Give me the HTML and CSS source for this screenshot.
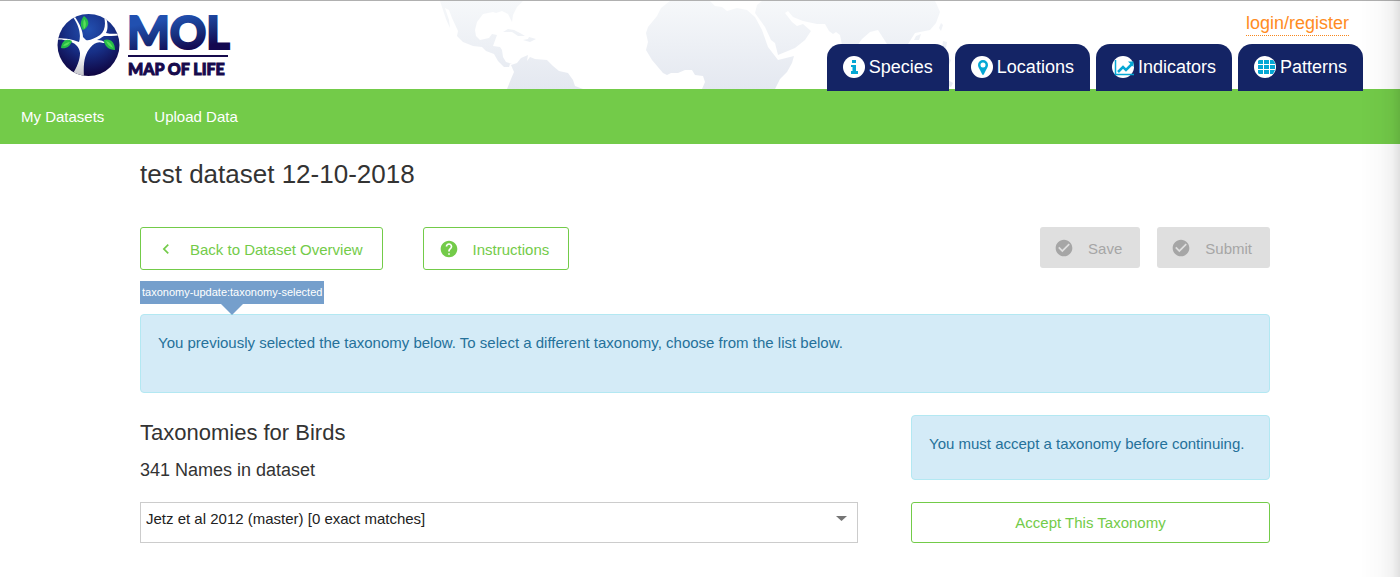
FILE: index.html
```html
<!DOCTYPE html>
<html lang="en">
<head>
<meta charset="utf-8">
<title>Map of Life - Datasets</title>
<link rel="stylesheet" href="styles.css">
</head>
<body>
<header class="header">
  <svg class="world" viewBox="440 1 520 88" width="520" height="88" aria-hidden="true">
    <defs>
      <linearGradient id="land" gradientUnits="userSpaceOnUse" x1="0" y1="1" x2="0" y2="89">
        <stop offset="0" stop-color="#f6f8fa"/>
        <stop offset="1" stop-color="#e4e8f0"/>
      </linearGradient>
    </defs>
    <g fill="url(#land)">
      <path d="M440 1L443 10L446 19L450 28L449 20L445 8L449 10L452 18L458 31L457 36L463 42L473 46L482 47L486 51L494 54L498 61L504 67L509 67L510 64L512 64L506 62L503 57L502 50L500 47L493 46L497 35L492 34L489 38L480 40L476 36L475 30L477 22L483 14L493 12L496 13L502 11L508 14L512 22L513 15L517 7L523 1Z"/>
      <path d="M507 89L511 79L514 72L511 65L517 63L521 58L528 55L527 61L530 57L535 59L547 60L553 66L559 71L568 73L573 80L575 86L583 89Z"/>
      <path d="M503 32L508 29L514 30L520 33L525 36L518 36L512 32Z"/>
      <path d="M523 40L528 39L529 37L536 39L530 42Z"/>
      <path d="M670 1L661 8L657 16L648 27L646 33L648 42L646 50L652 60L663 73L667 75L671 73L678 73L685 70L692 70L695 75L703 76L705 82L702 89L775 89L780 79L787 72L792 63L794 56L778 60L768 47L762 30L755 17L747 10L737 8L727 11L722 7L715 6L710 1Z"/>
      <path d="M762 1L757 5L755 13L765 27L771 40L775 43L778 55L795 48L805 40L811 31L803 24L797 26L792 22L785 13L788 11L793 17L803 21L817 24L825 24L829 31L833 34L836 32L840 35L843 50L848 62L854 50L862 39L870 32L878 30L887 44L893 60L905 60L908 44L915 33L930 30L936 23L940 12L937 5L935 1Z"/>
      <path d="M941 23L943 25L941 31L939 28ZM916 36L921 34L919 40L914 40ZM943 41L947 42L946 48L942 47ZM945 55L951 60L949 65L944 62ZM948 80L953 83L951 87L946 85Z"/>
    </g>
  </svg>
  <a class="brand" href="#" aria-label="Map of Life home">
    <svg viewBox="57 9 184 76" width="184" height="76" role="img" aria-label="MOL Map of Life">
      <defs>
        <radialGradient id="globe" cx="0.5" cy="0.25" r="0.75">
          <stop offset="0" stop-color="#2350b0"/>
          <stop offset="0.5" stop-color="#172f86"/>
          <stop offset="1" stop-color="#0f0440"/>
        </radialGradient>
        <linearGradient id="word" gradientUnits="userSpaceOnUse" x1="170" y1="14" x2="178" y2="52">
          <stop offset="0.1" stop-color="#2150b0"/>
          <stop offset="0.55" stop-color="#17317f"/>
          <stop offset="1" stop-color="#130850"/>
        </linearGradient>
        <linearGradient id="trunk" x1="0" y1="0" x2="0" y2="1">
          <stop offset="0.6" stop-color="#ffffff"/>
          <stop offset="1" stop-color="#bcbcc4"/>
        </linearGradient>
        <clipPath id="disc"><circle cx="88.500" cy="45" r="31"/></clipPath>
      </defs>
      <circle cx="88.500" cy="45" r="31" fill="url(#globe)"/>
      <g clip-path="url(#disc)">
        <path fill="url(#trunk)" d="M70 78C77 68 80 60 80 53C79 46 75 43 68 41C64 40 60 39 57 40L57 38.500C63 38 68 39 73 40L79 42C81 36 80 27 73 17L75 17C80 24 83 32 83 37L86 40C90 41 95 38 100 35C105 31 106 24 104 17L106 17C108 24 108 29 106 33C110 34 115 34 121 33.500L121 35C114 36 109 36 104 36C101 38 99 39 97 40C101 40 104 41 105 43L103 43C98 41 94 43 90 48C85 54 83 62 84 78Z"/>
        <path fill="#25bd48" d="M84 16C90 20 90 27 83 30C80 26 80 21 84 16ZM61 48C62 41 66 38 72 41C70 47 66 49 61 48ZM104 40C110 38 115 42 115 50C109 50 104 46 104 40Z"/>
        <path fill="#5bdc5d" d="M84 19C87 23 86 27 84 29C83 26 83 22 84 19ZM63 46C65 43 68 42 70 42C68 45 66 46 63 46ZM106 41C110 42 112 45 113 48C109 46 107 44 106 41Z"/>
      </g>
      <text class="brand-name" x="127" y="49" fill="url(#word)" stroke="url(#word)">MOL</text>
      <rect x="128" y="55" width="100" height="2" fill="#160a4c"/>
      <text class="brand-tag" x="128" y="75">MAP OF LIFE</text>
    </svg>
  </a>
  <div class="header-side">
    <a class="login" href="#">login/register</a>
    <nav class="tabs" aria-label="Sections">
      <a class="tab" href="#">
        <svg width="22" height="22" viewBox="0 0 22 22" aria-hidden="true"><circle cx="11" cy="11" r="11" fill="#fff"/><path fill="#04a7d4" d="M9 4h4v3H9zM8 9h5v6h2v3H8v-3h1.500v-4H8z"/></svg>
        <span>Species</span></a>
      <a class="tab" href="#">
        <svg width="22" height="22" viewBox="0 0 22 22" aria-hidden="true"><circle cx="11" cy="11" r="11" fill="#fff"/><path fill="#04a7d4" fill-rule="evenodd" d="M12 4a5 5 0 0 1 5 5c0 2-1 3-2 5l-2 4q-1 2-2 0l-2-4c-1-2-2-3-2-5a5 5 0 0 1 5-5zm0 2.500a2.500 2.500 0 1 0 0 5a2.500 2.500 0 1 0 0-5z"/></svg>
        <span>Locations</span></a>
      <a class="tab" href="#">
        <svg width="22" height="22" viewBox="0 0 22 22" aria-hidden="true"><circle cx="11" cy="11" r="11" fill="#fff"/><path fill="none" stroke="#04a7d4" stroke-width="1.500" d="M3.500 4v14.500H22"/><path fill="none" stroke="#04a7d4" stroke-width="2.500" d="M6 16l5-5 3 3 6-6"/><path fill="#04a7d4" d="M16 5.500h5.500V11z"/></svg>
        <span>Indicators</span></a>
      <a class="tab" href="#">
        <svg width="22" height="22" viewBox="0 0 22 22" aria-hidden="true"><circle cx="11" cy="11" r="11" fill="#fff"/><path fill="#04a7d4" d="M5 4h4v4H4V5zM10 4h5v4h-5zM16 4h3l2 3v1h-5zM4 9h5v4H4zM10 9h5v4h-5zM16 9h5v4h-5zM4 14h5v4H5l-1-1zM10 14h5v4h-5zM16 14h5l-2 4h-3z"/></svg>
        <span>Patterns</span></a>
    </nav>
  </div>
</header>
<nav class="subnav" aria-label="Datasets">
  <a href="#">My Datasets</a>
  <a href="#">Upload Data</a>
</nav>
<main class="content">
  <h1>test dataset 12-10-2018</h1>
  <div class="toolbar">
    <button class="btn btn-outline" type="button">
      <svg width="20" height="20" viewBox="0 0 24 24" aria-hidden="true"><path fill="currentColor" d="M15.410 7.410L14 6l-6 6 6 6 1.410-1.410L10.830 12z"/></svg>
      Back to Dataset Overview</button>
    <button class="btn btn-outline" type="button">
      <svg width="20" height="20" viewBox="0 0 24 24" aria-hidden="true"><path fill="currentColor" d="M12 2C6.480 2 2 6.480 2 12s4.480 10 10 10 10-4.480 10-10S17.520 2 12 2zm1 17h-2v-2h2v2zm2.070-7.750l-.9.920C13.450 12.900 13 13.500 13 15h-2v-.5c0-1.100.45-2.100 1.170-2.830l1.240-1.260c.37-.36.590-.86.590-1.410 0-1.100-.9-2-2-2s-2 .9-2 2H8c0-2.210 1.790-4 4-4s4 1.790 4 4c0 .88-.36 1.680-.93 2.250z"/></svg>
      Instructions</button>
    <div class="actions">
      <button class="btn btn-solid" type="button" disabled>
        <svg width="20" height="20" viewBox="0 0 24 24" aria-hidden="true"><path fill="currentColor" d="M12 2C6.480 2 2 6.480 2 12s4.480 10 10 10 10-4.480 10-10S17.520 2 12 2zm-2 15l-5-5 1.410-1.410L10 14.170l7.590-7.590L19 8l-9 9z"/></svg>
        Save</button>
      <button class="btn btn-solid" type="button" disabled>
        <svg width="20" height="20" viewBox="0 0 24 24" aria-hidden="true"><path fill="currentColor" d="M12 2C6.480 2 2 6.480 2 12s4.480 10 10 10 10-4.480 10-10S17.520 2 12 2zm-2 15l-5-5 1.410-1.410L10 14.170l7.590-7.590L19 8l-9 9z"/></svg>
        Submit</button>
    </div>
  </div>
  <div class="key-tip">taxonomy-update:taxonomy-selected</div>
  <div class="notice notice-wide">You previously selected the taxonomy below. To select a different taxonomy, choose from the list below.</div>
  <div class="columns">
    <section>
      <h2>Taxonomies for Birds</h2>
      <h3 id="names">341 Names in dataset</h3>
    </section>
    <div class="notice">You must accept a taxonomy before continuing.</div>
    <div class="picker">
      <select aria-label="Taxonomy" aria-describedby="names">
        <option>Jetz et al 2012 (master) [0 exact matches]</option>
      </select>
      <svg class="caret" width="11" height="5" viewBox="0 0 11 5" aria-hidden="true"><path fill="#757575" d="M0 0h11L5.500 5z"/></svg>
    </div>
    <button class="btn btn-outline btn-accept" type="button">Accept This Taxonomy</button>
  </div>
</main>
<div class="edge-shade"></div>
</body>
</html>
```

FILE: styles.css
```css
* { box-sizing: border-box; }

body {
  margin: 0;
  background: #fff;
  color: #333;
  font-family: "Liberation Sans", Arial, sans-serif;
  font-size: 15px;
  line-height: 20px;
}

a { text-decoration: none; }

.header {
  position: relative;
  display: flex;
  justify-content: space-between;
  border-top: 1px solid #b0b0b0;
  padding: 0 37px 0 57px;
}

.world {
  position: absolute;
  top: 0;
  left: 50%;
  margin-left: -260px;
}

.brand { padding-top: 8px; }
.brand svg { display: block; overflow: visible; }
.brand-name { font: 900 45px Lato, sans-serif; stroke-width: 2px; }
.brand-tag {
  font: 900 16px Lato, sans-serif;
  fill: #160a4c;
  stroke: #160a4c;
  stroke-width: 1px;
}

.header-side {
  position: relative;
  z-index: 1;
  display: flex;
  flex-direction: column;
  align-items: flex-end;
  padding-top: 11px;
}

.login {
  margin-right: 14px;
  border-bottom: 1px dotted #f7861c;
  color: #ff8c23;
  font-size: 18px;
  line-height: 23px;
}

.tabs { display: flex; gap: 6px; margin: 8px 0 -2px; }

.tab {
  display: flex;
  align-items: center;
  gap: 4px;
  height: 47px;
  padding: 0 16px 2px;
  border-radius: 14px 14px 0 0;
  background: #142465;
  color: #fff;
  font-size: 18px;
}

.subnav {
  display: flex;
  gap: 50px;
  padding: 18px 21px 17px;
  background: #73cb49;
}
.subnav a { color: #fff; }

.content { padding: 14px 130px 0 140px; }

h1, h2, h3 { margin: 0; font-weight: 400; }
h1 { font-size: 26px; line-height: 32px; }
h2 { font-size: 22px; line-height: 28px; padding-top: 4px; }
h3 { font-size: 18px; line-height: 20px; padding-top: 13px; }

.toolbar { display: flex; align-items: flex-start; gap: 40px; margin-top: 37px; }

.btn {
  display: flex;
  align-items: center;
  justify-content: center;
  gap: 14px;
  border-radius: 3px;
  font: inherit;
  white-space: nowrap;
}

.btn-outline {
  min-height: 43px;
  padding: 2px 19px 0 15px;
  border: 1px solid #73cb49;
  background: #fff;
  color: #73cb49;
}

.btn-solid {
  min-height: 41px;
  padding: 2px 18px 0 14px;
  border: 0;
  background: #dfdfdf;
  color: #a6a6a6;
}
.btn svg { margin-top: -2px; }

.actions { display: flex; gap: 17px; margin-left: auto; }

.key-tip {
  position: relative;
  width: max-content;
  margin-top: 11px;
  padding: 0 2px;
  background: #759fcc;
  color: #fff;
  font-size: 11px;
  line-height: 23px;
}
.key-tip::after {
  content: "";
  position: absolute;
  top: 100%;
  left: 50%;
  margin-left: -11px;
  border: 11px solid transparent;
  border-top-color: #759fcc;
  border-bottom: 0;
}

.notice {
  padding: 18px 17px 25px;
  border: 1px solid #b3e8f2;
  border-radius: 4px;
  background: #d4ebf7;
  color: #25719a;
}
.notice-wide { margin-top: 10px; padding-bottom: 39px; }

.columns {
  display: grid;
  grid-template-columns: 2fr 1fr;
  gap: 22px 53px;
  margin-top: 22px;
}

.picker { position: relative; }
.picker select {
  display: block;
  width: 100%;
  height: 41px;
  padding: 0 24px 7px 5px;
  border: 1px solid #ccc;
  border-radius: 0;
  appearance: none;
  background: #fff;
  color: #222;
  font: inherit;
}
.caret { position: absolute; top: 14px; right: 11px; }

.btn-accept { width: 100%; min-height: 41px; padding: 0; }

.edge-shade {
  position: fixed;
  inset: 0 0 0 auto;
  z-index: 2;
  width: 40px;
  background: linear-gradient(to right, transparent, rgba(0, 0, 0, 0.02) 50%, rgba(0, 0, 0, 0.05) 80%, rgba(0, 0, 0, 0.12));
  pointer-events: none;
}
```
